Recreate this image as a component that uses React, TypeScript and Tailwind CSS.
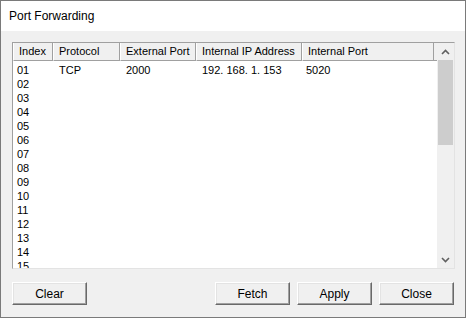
import React from "react";

const columns = [
  { label: "Index", w: "w-[40px]" },
  { label: "Protocol", w: "w-[67px]" },
  { label: "External Port", w: "w-[76px]" },
  { label: "Internal IP Address", w: "w-[106px]" },
  { label: "Internal Port", w: "w-[132px]" },
];

const rows = Array.from({ length: 15 }, (_, i) => {
  const idx = String(i + 1).padStart(2, "0");
  if (i === 0) return [idx, "TCP", "2000", "192. 168. 1. 153", "5020"];
  return [idx, "", "", "", ""];
});

function Chevron({ up }: { up?: boolean }) {
  return (
    <svg width="9" height="6" viewBox="0 0 9 6">
      <path
        d={up ? "M1 5 L4.5 1.5 L8 5" : "M1 1 L4.5 4.5 L8 1"}
        fill="none"
        stroke="#606060"
        strokeWidth="1.6"
      />
    </svg>
  );
}

function Button({ children }: { children: React.ReactNode }) {
  return (
    <button className="w-[75px] h-[23px] bg-[#f0f0f0] border-t border-l border-b border-r border-t-[#ffffff] border-l-[#ffffff] border-b-[#696969] border-r-[#696969] shadow-[inset_-1px_-1px_#a0a0a0,inset_1px_1px_#e3e3e3] text-[12px] text-black flex items-center justify-center">
      {children}
    </button>
  );
}

export default function App() {
  return (
    <div className="w-[466px] h-[318px] border border-[#7a7a7a] bg-[#f0f0f0] flex flex-col font-['Liberation_Sans',Arial,sans-serif]">
      {/* title bar */}
      <div className="h-[30px] bg-white flex items-center pl-[8px] text-[12px] text-black">
        Port Forwarding
      </div>

      <div className="flex-1 flex flex-col pt-[11px] pl-[11px] pr-[10px]">
        {/* list view */}
        <div className="w-[443px] h-[227px] border border-t-[#a0a0a0] border-l-[#a0a0a0] border-b-[#e3e3e3] border-r-[#e3e3e3] bg-white flex overflow-hidden">
          <div className="w-[424px] flex flex-col">
            <div className="h-[18px] flex shrink-0 text-[11px] text-black">
              {columns.map((c) => (
                <div
                  key={c.label}
                  className={`${c.w} h-full border-l border-l-white border-r border-r-[#a0a0a0] border-b border-b-[#a0a0a0] bg-[#f0f0f0] flex items-center pl-[5px] whitespace-nowrap`}
                >
                  {c.label}
                </div>
              ))}
              <div className="flex-1 h-full border-b border-b-[#a0a0a0] bg-[#f0f0f0]" />
            </div>
            <div className="flex-1 overflow-hidden pt-[2px] text-[11px] text-black">
              {rows.map((r) => (
                <div key={r[0]} className="h-[14px] flex items-center">
                  <div className="w-[40px] pl-[4px]">{r[0]}</div>
                  <div className="w-[67px] pl-[6px]">{r[1]}</div>
                  <div className="w-[76px] pl-[6px]">{r[2]}</div>
                  <div className="w-[106px] pl-[6px] whitespace-nowrap">{r[3]}</div>
                  <div className="w-[132px] pl-[4px]">{r[4]}</div>
                </div>
              ))}
            </div>
          </div>

          {/* scrollbar */}
          <div className="w-[17px] bg-[#f0f0f0] flex flex-col">
            <div className="h-[17px] flex items-center justify-center">
              <Chevron up />
            </div>
            <div className="mx-[1px] h-[85px] bg-[#cdcdcd]" />
            <div className="flex-1" />
            <div className="h-[17px] flex items-center justify-center">
              <Chevron />
            </div>
          </div>
        </div>

        {/* buttons */}
        <div className="mt-[13px] flex items-center pr-[1px]">
          <Button>Clear</Button>
          <div className="flex-1" />
          <div className="flex gap-[7px]">
            <Button>Fetch</Button>
            <Button>Apply</Button>
            <Button>Close</Button>
          </div>
        </div>
      </div>
    </div>
  );
}
